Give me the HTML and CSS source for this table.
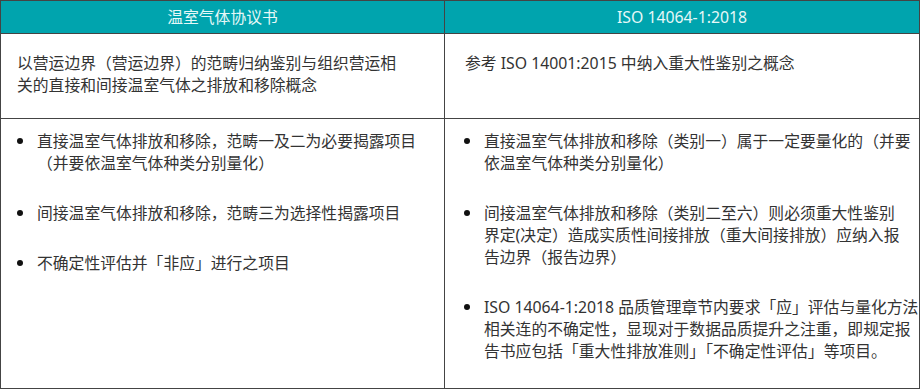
FILE: index.html
```html
<!DOCTYPE html>
<html lang="zh-CN">
<head>
<meta charset="utf-8">
<link rel="stylesheet" href="styles.css">
</head>
<body>
<div class="compare">
  <div class="head">温室气体协议书</div>
  <div class="head">ISO 14064-1:2018</div>

  <div class="cell scope left">以营运边界（营运边界）的范畴归纳鉴别与组织营运相<br>关的直接和间接温室气体之排放和移除概念</div>
  <div class="cell scope right">参考 ISO 14001:2015 中纳入重大性鉴别之概念</div>

  <div class="cell items left">
    <ul class="list">
      <li>直接温室气体排放和移除，范畴一及二为必要揭露项目<br>（并要依温室气体种类分别量化）</li>
      <li>间接温室气体排放和移除，范畴三为选择性揭露项目</li>
      <li>不确定性评估并「非应」进行之项目</li>
    </ul>
  </div>
  <div class="cell items right">
    <ul class="list">
      <li>直接温室气体排放和移除（类别一）属于一定要量化的（并要<br>依温室气体种类分别量化）</li>
      <li>间接温室气体排放和移除（类别二至六）则必须重大性鉴别<br>界定(决定）造成实质性间接排放（重大间接排放）应纳入报<br>告边界（报告边界）</li>
      <li>ISO 14064-1:2018 品质管理章节内要求「应」评估与量化方法<br>相关连的不确定性，显现对于数据品质提升之注重，即规定报<br>告书应包括「重大性排放准则」「不确定性评估」等项目。</li>
    </ul>
  </div>
</div>
</body>
</html>
```

FILE: styles.css
```css
html, body {
  margin: 0;
  padding: 0;
  background: #ffffff;
}

.compare {
  box-sizing: border-box;
  width: 920px;
  height: 389px;
  padding: 1px;
  background: #444444;
  display: grid;
  grid-template-columns: 443px 474px;
  grid-template-rows: 32px 84px 269px;
  gap: 1px;
  font-family: "Noto Sans", "Noto Sans CJK SC", sans-serif;
  font-size: 15.8px;
  color: #333333;
}

.head {
  background: #00a4ae;
  color: #e6f8f8;
  display: flex;
  align-items: center;
  justify-content: center;
  line-height: 22px;
}

.cell {
  background: #ffffff;
  line-height: 22px;
  white-space: nowrap;
  overflow: hidden;
}

.scope {
  padding-top: 18px;
}

.scope.left {
  padding-left: 16px;
}

.scope.right {
  padding-left: 20px;
}

.items {
  padding-top: 11px;
}

.items.left {
  padding-left: 16px;
}

.items.right {
  padding-left: 19px;
}

.list {
  list-style: none;
  margin: 0;
  padding: 0;
  display: flex;
  flex-direction: column;
  gap: 28px;
}

.list li {
  display: flex;
  align-items: flex-start;
}

.list li::before {
  content: "";
  flex: none;
  width: 6px;
  height: 6px;
  border-radius: 50%;
  background: #111111;
  margin-top: 8px;
  margin-right: 14px;
}
```
